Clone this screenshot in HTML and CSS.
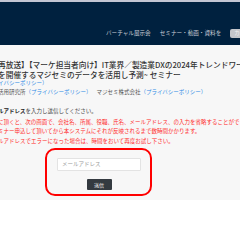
FILE: index.html
```html
<!DOCTYPE html>
<html lang="ja">
<head>
    <meta charset="UTF-8">
    <meta name="viewport" content="width=device-width, initial-scale=1.0">
    <title>マジセミ セミナー申込</title>
    <link rel="stylesheet" href="styles.css">
</head>
<body>

<header class="site-header">
    <nav class="global-nav">
        <a class="nav-link" href="#">バーチャル展示会</a>
        <a class="nav-link" href="#">セミナー・動画・資料を</a>
        <a class="nav-btn" href="#">カテゴリ</a>
    </nav>
</header>

<main class="page">
    <div class="content">
        <h1 class="seminar-title">再放送】【マーケ担当者向け】IT業界／製造業DXの2024年トレンドワード予測<br>を開催するマジセミのデータを活用し予測~ セミナー</h1>
        <p class="sponsor"><a href="#">イバシーポリシー）</a></p>
        <p class="sponsor">活用研究所<a href="#">（プライバシーポリシー）</a><span class="sponsor-gap">マジセミ株式会社</span><a href="#">（プライバシーポリシー）</a></p>

        <p class="lead"><strong>ルアドレス</strong>を入力し送信してください。</p>
        <ul class="notes">
            <li>に頂くと、次の画面で、会社名、所属、役職、氏名、メールアドレス、の入力を省略することができます。</li>
            <li>ミナー申込して頂いてから本システムにそれが反映されるまで数時間かかります。</li>
            <li>ルアドレスでエラーになった場合は、時間をおいて再度お試し下さい。</li>
        </ul>

        <form class="mail-form" onsubmit="return false">
            <input class="mail-input" type="email" placeholder="メールアドレス">
            <button class="mail-submit" type="submit">送信</button>
        </form>
    </div>
</main>

</body>
</html>
```

FILE: styles.css
```css
html, body { overflow: hidden; }
body { margin: 0; background: #fff; font-family: "Noto Sans CJK JP", "Noto Sans", sans-serif; color: #444; }

.site-header { background: #00213f; border-top: 2px solid #c3c6d3; height: 43px; }
.global-nav { display: flex; align-items: center; gap: 9px; padding: 27px 0 0 106px; white-space: nowrap; }
.nav-link { color: #c9cdd6; font-size: 5.6px; line-height: 9px; text-decoration: none; }
.nav-btn { background: #c4c6cb; color: #f2f2f2; font-size: 5.6px; line-height: 9px; padding: 0 4px; border-radius: 2px; text-decoration: none; }

.page { background: #f7f7f7; padding: 15px 0 4px; }
.content { margin-left: -2px; width: 201px; white-space: nowrap; }

.seminar-title { margin: 0; font-size: 7.7px; line-height: 9.5px; font-weight: 500; color: #333; }
.sponsor { margin: 0; font-size: 5.5px; line-height: 8px; color: #555; }
.sponsor + .sponsor { line-height: 10px; }
.sponsor a { color: #2f8be6; text-decoration: none; }
.sponsor-gap { margin-left: 5px; }

.lead { margin: 10px 0 0; font-size: 5.5px; line-height: 9px; color: #444; }
.lead strong { color: #222; }

.notes { list-style: none; margin: 1.5px 0 0; padding: 0; font-size: 5.5px; line-height: 9.5px; color: #ff2a2a; }

.mail-form { display: flex; flex-direction: column; align-items: center; gap: 8px; width: 107px; box-sizing: border-box; margin: 1.5px auto 0; padding: 8px 9px 4px 10px; border: 2px solid #ff0000; border-radius: 10px; }
.mail-input { width: 100%; height: 13px; box-sizing: border-box; margin: 0; padding: 0 4px; border: 1px solid #e3e3e3; border-radius: 1px; background: #fff; font-family: inherit; font-size: 5.5px; }
.mail-input::placeholder { color: #9a9a9a; }
.mail-submit { width: 25px; height: 11px; padding: 0; border: 0; border-radius: 1px; background: #343a40; color: #fff; font-family: inherit; font-size: 5px; }
```
